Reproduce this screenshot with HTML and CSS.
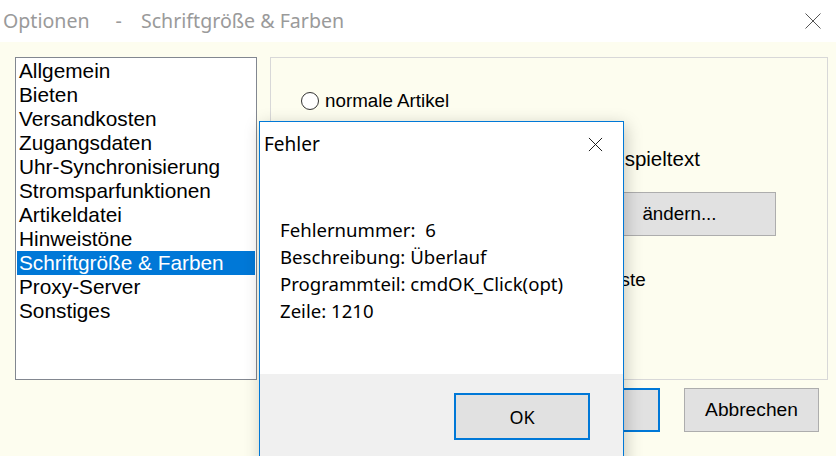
FILE: index.html
```html
<!DOCTYPE html>
<html lang="de">
<head>
<meta charset="utf-8">
<title>Optionen</title>
<link rel="stylesheet" href="styles.css">
</head>
<body>
<div class="window">
  <div class="titlebar">
    <span class="title"><span>Optionen</span><span class="dash">-</span><span class="sub">Schriftgröße &amp; Farben</span></span>
    <svg class="close" width="16" height="16" viewBox="0 0 16 16"><path d="M0.5 0.5L15.5 15.5M15.5 0.5L0.5 15.5" stroke="#555" stroke-width="1" fill="none"/></svg>
  </div>
  <div class="content">
    <ul class="listbox">
      <li>Allgemein</li>
      <li>Bieten</li>
      <li>Versandkosten</li>
      <li>Zugangsdaten</li>
      <li>Uhr-Synchronisierung</li>
      <li>Stromsparfunktionen</li>
      <li>Artikeldatei</li>
      <li>Hinweistöne</li>
      <li class="selected">Schriftgröße &amp; Farben</li>
      <li>Proxy-Server</li>
      <li>Sonstiges</li>
    </ul>
    <div class="rightcol">
      <div class="panel">
        <label class="radio-row"><span class="radio"></span>normale Artikel</label>
        <div class="sample">Beispieltext</div>
        <button class="btn change">ändern...</button>
        <div class="listtext">Artikelliste</div>
      </div>
      <div class="buttons">
        <button class="btn default">OK</button>
        <button class="btn">Abbrechen</button>
      </div>
    </div>
  </div>

  <div class="dialog">
    <div class="dlg-title">
      <span>Fehler</span>
      <svg class="dlg-close" width="16" height="16" viewBox="0 0 16 16"><path d="M1 1L15 15M15 1L1 15" stroke="#111" stroke-width="1" fill="none"/></svg>
    </div>
    <div class="dlg-body">
      <p>Fehlernummer:&nbsp; 6</p>
      <p>Beschreibung: Überlauf</p>
      <p>Programmteil: cmdOK_Click(opt)</p>
      <p>Zeile: 1210</p>
    </div>
    <div class="dlg-footer">
      <button class="btn default ok">OK</button>
    </div>
  </div>
</div>
</body>
</html>
```

FILE: styles.css
```css
* { box-sizing: border-box; }
html, body { margin: 0; padding: 0; }
body { width: 836px; height: 456px; overflow: hidden; }

.window {
  position: relative;
  width: 836px;
  height: 456px;
  background: #fdfdef;
  overflow: hidden;
}

.titlebar {
  height: 42px;
  background: #ffffff;
  display: flex;
  align-items: center;
  justify-content: space-between;
  padding: 0 15px 0 3px;
}
.title {
  white-space: pre;
  font-family: "Noto Sans", sans-serif;
  font-size: 19.6px;
  color: #9a9a9a;
  margin-top: -1px;
  display: flex;
  align-items: baseline;
}
.dash { margin-left: 26px; }
.sub { margin-left: 19px; }

.content {
  display: flex;
  gap: 13px;
  padding: 15px 0 0 15px;
}

.listbox {
  list-style: none;
  margin: 0;
  width: 242px;
  height: 323px;
  padding: 1px;
  background: #fff;
  border: 1px solid #828790;
  font-family: "Liberation Sans", Arial, sans-serif;
  font-size: 20.8px;
  color: #000;
}
.listbox li {
  height: 24px;
  line-height: 24px;
  padding-left: 2px;
  white-space: nowrap;
}
.listbox li.selected {
  background: #0078d7;
  color: #fff;
}

.rightcol {
  width: 558px;
  display: flex;
  flex-direction: column;
}
.panel {
  height: 323px;
  border: 1px solid #d8d8d8;
  display: flex;
  flex-direction: column;
  align-items: flex-start;
  padding: 33px 0 0 30px;
  font-family: "Liberation Sans", Arial, sans-serif;
  font-size: 18.8px;
  color: #000;
}
.radio-row {
  display: flex;
  align-items: center;
  gap: 6px;
  height: 20px;
}
.radio {
  width: 18px;
  height: 18px;
  border: 1px solid #333;
  border-radius: 50%;
  background: #fff;
}
.sample {
  margin: 37px 0 0 294px;
  height: 22px;
  line-height: 22px;
  font-size: 20.5px;
}
.btn {
  font-family: "Liberation Sans", Arial, sans-serif;
  font-size: 19.2px;
  color: #000;
  background: #e1e1e1;
  border: 1px solid #adadad;
  width: 135px;
  height: 44px;
  padding: 0;
}
.change {
  margin: 22px 0 0 282px;
  width: 193px;
  font-size: 18.8px;
}
.listtext {
  margin: 34px 0 0 259px;
  height: 20px;
  line-height: 20px;
}

.buttons {
  display: flex;
  justify-content: flex-end;
  gap: 24px;
  margin-top: 8px;
  padding-right: 9px;
}
.btn.default {
  border: 2px solid #0078d7;
}

.dialog {
  position: absolute;
  left: 259px;
  top: 121px;
  width: 365px;
  height: 345px;
  background: #fff;
  border: 1px solid #0078d7;
  box-shadow: 2px 4px 16px rgba(0, 0, 0, 0.22);
  display: flex;
  flex-direction: column;
  font-family: "Noto Sans", sans-serif;
  color: #000;
}
.dlg-title {
  height: 44px;
  display: flex;
  align-items: center;
  justify-content: space-between;
  padding: 0 20px 0 4px;
  font-size: 19px;
}
.dlg-close { width: 15px; height: 15px; }
.dlg-body {
  flex: 0 0 auto;
  height: 208px;
  padding: 50px 0 0 20px;
  font-size: 18.6px;
}
.dlg-body p {
  margin: 0;
  height: 27px;
  line-height: 27px;
  white-space: pre;
}
.dlg-footer {
  flex: 1;
  background: #f0f0f0;
  padding: 19px 0 0 194px;
}
.ok {
  font-family: "Noto Sans", sans-serif;
  width: 136px;
  height: 47px;
  font-size: 18px;
}
```
